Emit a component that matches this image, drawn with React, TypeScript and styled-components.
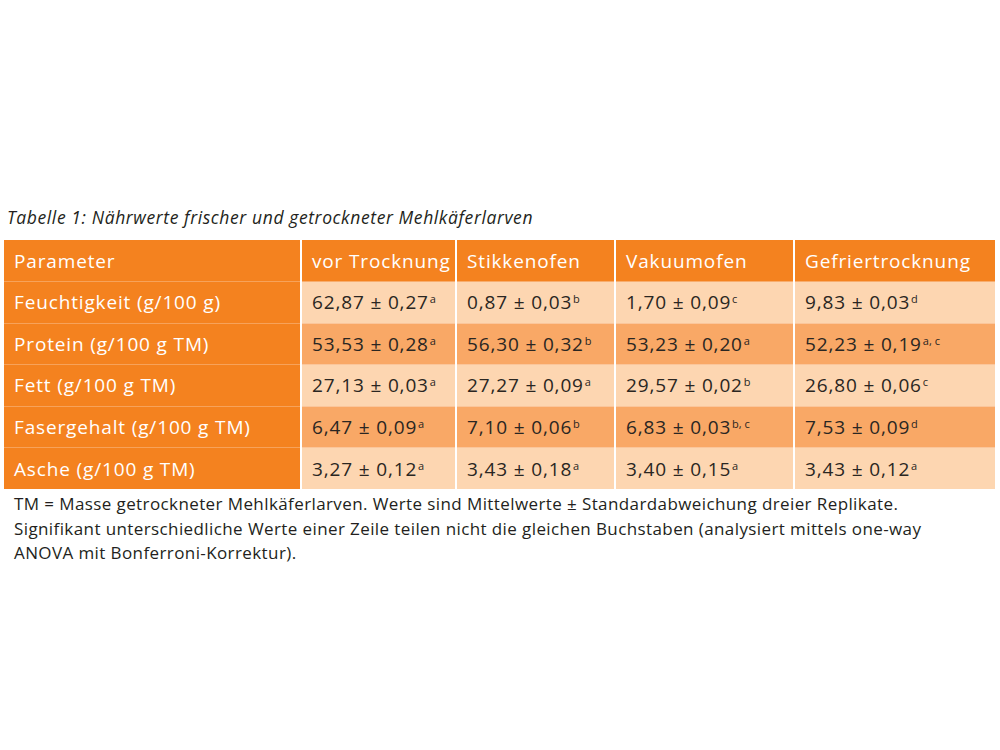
import React from "react";
import styled, { createGlobalStyle } from "styled-components";

const Global = createGlobalStyle`
  html, body { margin: 0; padding: 0; background: #ffffff; }
  body { font-family: "Open Sans", "Noto Sans", sans-serif; color: #231f20; }
`;

const Page = styled.div`
  width: 1000px;
  height: 750px;
  box-sizing: border-box;
  padding: 205px 5px 0 4px;
  display: flex;
  flex-direction: column;
`;

const Caption = styled.div`
  font-style: italic;
  font-size: 17.5px;
  line-height: 24px;
  letter-spacing: 0.6px;
  padding-left: 3px;
  height: 35px;
  color: #231f20;
`;

const Table = styled.table`
  border-collapse: collapse;
  table-layout: fixed;
  width: 991px;
  font-size: 19px;
  letter-spacing: 0.85px;
`;

const Row = styled.tr`
  height: 41.5px;
`;

type Tone = "head" | "light" | "mid";
const bg: Record<Tone, string> = {
  head: "#f4821f",
  light: "#fdd6b1",
  mid: "#f9a866",
};

const Cell = styled.td<{ $tone: Tone; $first?: boolean }>`
  background: ${(p) => bg[p.$tone]};
  color: ${(p) => (p.$tone === "head" ? "#ffffff" : "#2a2622")};
  padding: 0 0 0 10px;
  white-space: nowrap;
  border-left: ${(p) => (p.$first ? "none" : "2px solid #ffffff")};
  border-top: 1px solid ${(p) => (p.$tone === "head" ? "#f7a25a" : "rgba(255,255,255,0.35)")};
  vertical-align: middle;
  box-sizing: border-box;
`;

const Head = styled.th<{ $first?: boolean }>`
  background: #f4821f;
  color: #ffffff;
  font-weight: 400;
  text-align: left;
  padding: 0 0 0 10px;
  white-space: nowrap;
  border-left: ${(p) => (p.$first ? "none" : "2px solid #ffffff")};
  vertical-align: middle;
`;

const Sup = styled.sup`
  font-size: 11px;
  vertical-align: 6px;
  line-height: 0;
  letter-spacing: 0;
  margin-left: 1px;
`;

const Footnote = styled.p`
  margin: 3px 0 0 10px;
  font-size: 17px;
  line-height: 24.5px;
  letter-spacing: 0.4px;
  color: #231f20;
`;

const headers = ["Parameter", "vor Trocknung", "Stikkenofen", "Vakuumofen", "Gefriertrocknung"];

type V = [string, string];
const rows: { label: string; values: V[] }[] = [
  { label: "Feuchtigkeit (g/100 g)", values: [["62,87 ± 0,27", "a"], ["0,87 ± 0,03", "b"], ["1,70 ± 0,09", "c"], ["9,83 ± 0,03", "d"]] },
  { label: "Protein (g/100 g TM)", values: [["53,53 ± 0,28", "a"], ["56,30 ± 0,32", "b"], ["53,23 ± 0,20", "a"], ["52,23 ± 0,19", "a, c"]] },
  { label: "Fett (g/100 g TM)", values: [["27,13 ± 0,03", "a"], ["27,27 ± 0,09", "a"], ["29,57 ± 0,02", "b"], ["26,80 ± 0,06", "c"]] },
  { label: "Fasergehalt (g/100 g TM)", values: [["6,47 ± 0,09", "a"], ["7,10 ± 0,06", "b"], ["6,83 ± 0,03", "b, c"], ["7,53 ± 0,09", "d"]] },
  { label: "Asche (g/100 g TM)", values: [["3,27 ± 0,12", "a"], ["3,43 ± 0,18", "a"], ["3,40 ± 0,15", "a"], ["3,43 ± 0,12", "a"]] },
];

const widths = [297, 155, 159, 179, 201];

export default function App() {
  return (
    <>
      <Global />
      <Page>
        <Caption>Tabelle 1: Nährwerte frischer und getrockneter Mehlkäferlarven</Caption>
        <Table>
          <colgroup>
            {widths.map((w, i) => (
              <col key={i} style={{ width: w }} />
            ))}
          </colgroup>
          <thead>
            <Row>
              {headers.map((h, i) => (
                <Head key={h} $first={i === 0}>{h}</Head>
              ))}
            </Row>
          </thead>
          <tbody>
            {rows.map((r, ri) => (
              <Row key={r.label}>
                <Cell $tone="head" $first>{r.label}</Cell>
                {r.values.map(([v, s], ci) => (
                  <Cell key={ci} $tone={ri % 2 === 0 ? "light" : "mid"}>
                    {v}
                    <Sup>{s}</Sup>
                  </Cell>
                ))}
              </Row>
            ))}
          </tbody>
        </Table>
        <Footnote>
          TM = Masse getrockneter Mehlkäferlarven. Werte sind Mittelwerte ± Standardabweichung dreier Replikate.
          <br />
          Signifikant unterschiedliche Werte einer Zeile teilen nicht die gleichen Buchstaben (analysiert mittels one-way
          <br />
          ANOVA mit Bonferroni-Korrektur).
        </Footnote>
      </Page>
    </>
  );
}
